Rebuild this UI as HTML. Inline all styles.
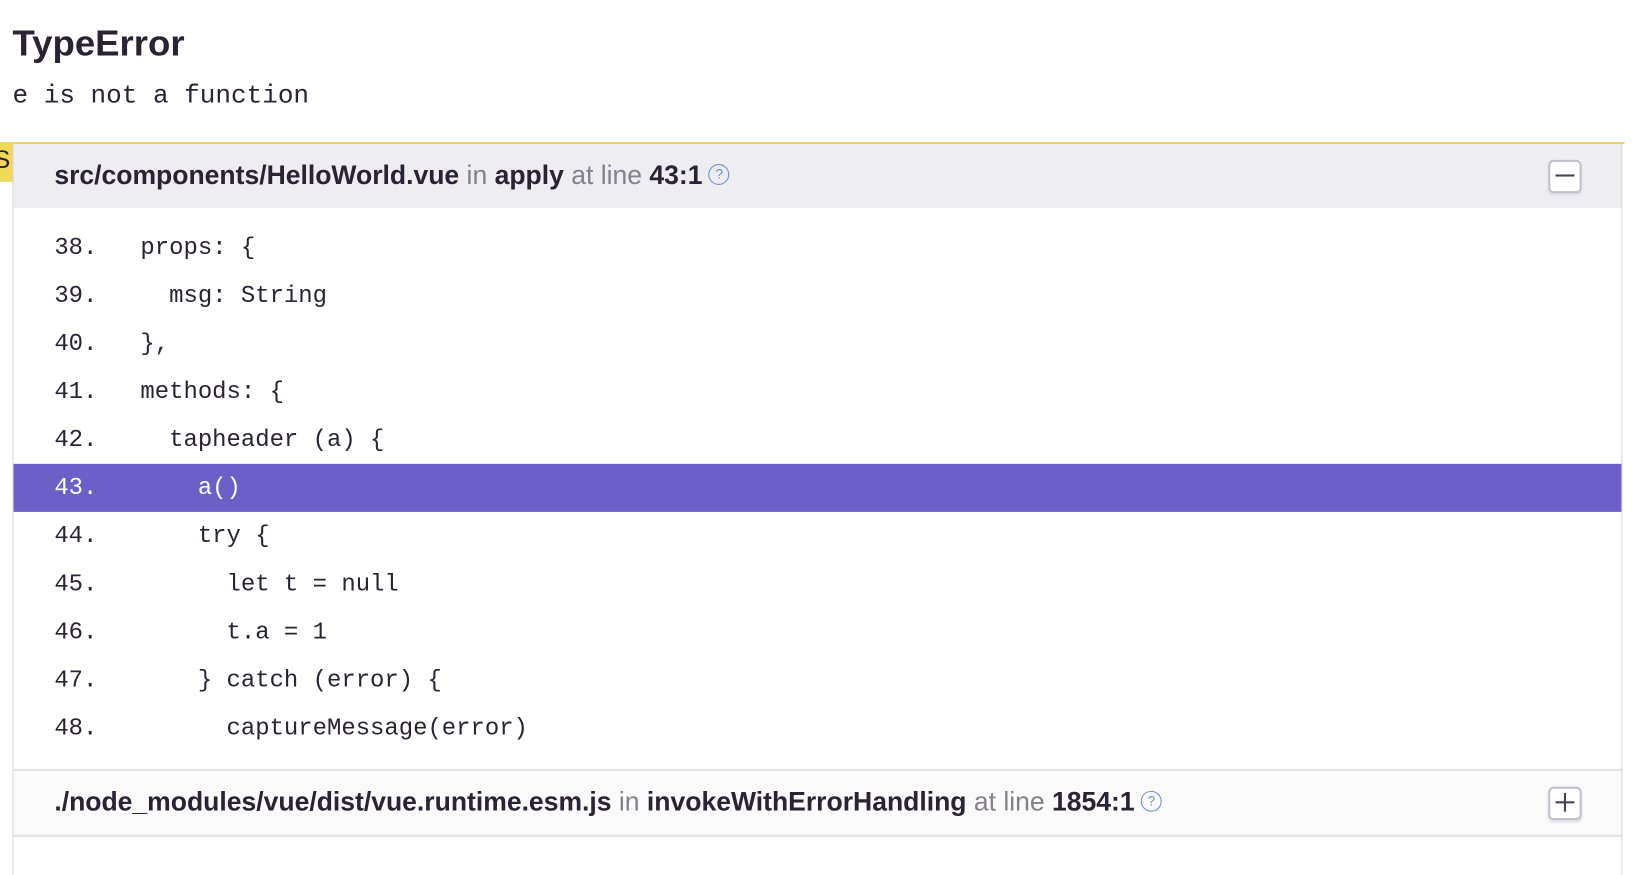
<!DOCTYPE html>
<html><head><style>
body{margin:0;background:#fff;width:1636px;height:850px;overflow:hidden;font-family:"Liberation Sans",sans-serif;color:#2b2233}
#w{position:absolute;left:0;top:0;width:1566px;height:814px;transform:scale(1.0447);transform-origin:0 0}
.t{position:absolute;left:12px;top:22px;font-size:35px;font-weight:bold}
.s{position:absolute;left:12px;top:78px;font-family:"Liberation Mono",monospace;font-size:24.9px}
.yl{position:absolute;left:0;top:136px;width:1555px;height:2px;background:#e7d45b}
.tab{position:absolute;left:0;top:137px;width:12px;height:37px;background:#f0d85a;overflow:hidden;font-size:24px;line-height:34px;text-indent:-6px}
.box{position:absolute;left:12px;top:138px;width:1539px;height:700px;border-left:1px solid #d6d3dc;border-right:1px solid #d6d3dc}
.hd{height:61px;background:#ededf2;font-size:25.4px;line-height:61px;padding-left:39px;position:relative;white-space:nowrap}
.hd b{font-weight:bold;color:#2b2233}.hd i{font-style:normal;color:#857f8a}
.q{display:inline-block;width:18px;height:18px;border:1.5px solid #6c8fd8;border-radius:50%;color:#6c8fd8;font-size:13px;line-height:18px;text-align:center;vertical-align:middle;margin-left:6px;position:relative;top:-2px}
.btn{position:absolute;right:38px;top:15px;width:28px;height:28px;border:2px solid #c4bfcc;border-radius:5px;background:#fff;box-shadow:0 2px 2px #e0dee5}
.code{padding:15px 0 0;font-family:"Liberation Mono",monospace;font-size:22.9px}
.l{height:46px;line-height:46px;white-space:pre;padding-left:39px;color:#2b2233}
.l.a{background:#6c5fc7;color:#fff}
.f{position:absolute;left:0;top:598px;width:100%;height:61px;background:#fafafa;border-top:2px solid #e3e0e8;border-bottom:2px solid #e3e0e8}
</style></head><body><div id="w">
<div class="t">TypeError</div>
<div class="s">e is not a function</div>
<div class="yl"></div>
<div class="tab">S</div>
<div class="box">
<div class="hd"><b>src/components/HelloWorld.vue</b> <i>in</i> <b>apply</b> <i>at line</i> <b>43:1</b><span class="q">?</span>
<div class="btn"><div style="position:absolute;left:5px;top:12px;width:18px;height:2px;background:#4a3f57"></div></div></div>
<div class="code">
<div class="l">38.   props: {</div>
<div class="l">39.     msg: String</div>
<div class="l">40.   },</div>
<div class="l">41.   methods: {</div>
<div class="l">42.     tapheader (a) {</div>
<div class="l a">43.       a()</div>
<div class="l">44.       try {</div>
<div class="l">45.         let t = null</div>
<div class="l">46.         t.a = 1</div>
<div class="l">47.       } catch (error) {</div>
<div class="l">48.         captureMessage(error)</div>
</div>
<div class="f"><div class="hd" style="background:none;height:61px;line-height:61px"><b>./node_modules/vue/dist/vue.runtime.esm.js</b> <i>in</i> <b>invokeWithErrorHandling</b> <i>at line</i> <b>1854:1</b><span class="q">?</span>
<div class="btn"><div style="position:absolute;left:5px;top:12px;width:18px;height:2px;background:#4a3f57"></div><div style="position:absolute;left:13px;top:4px;width:2px;height:18px;background:#4a3f57"></div></div></div></div>
</div>
</div></body></html>
